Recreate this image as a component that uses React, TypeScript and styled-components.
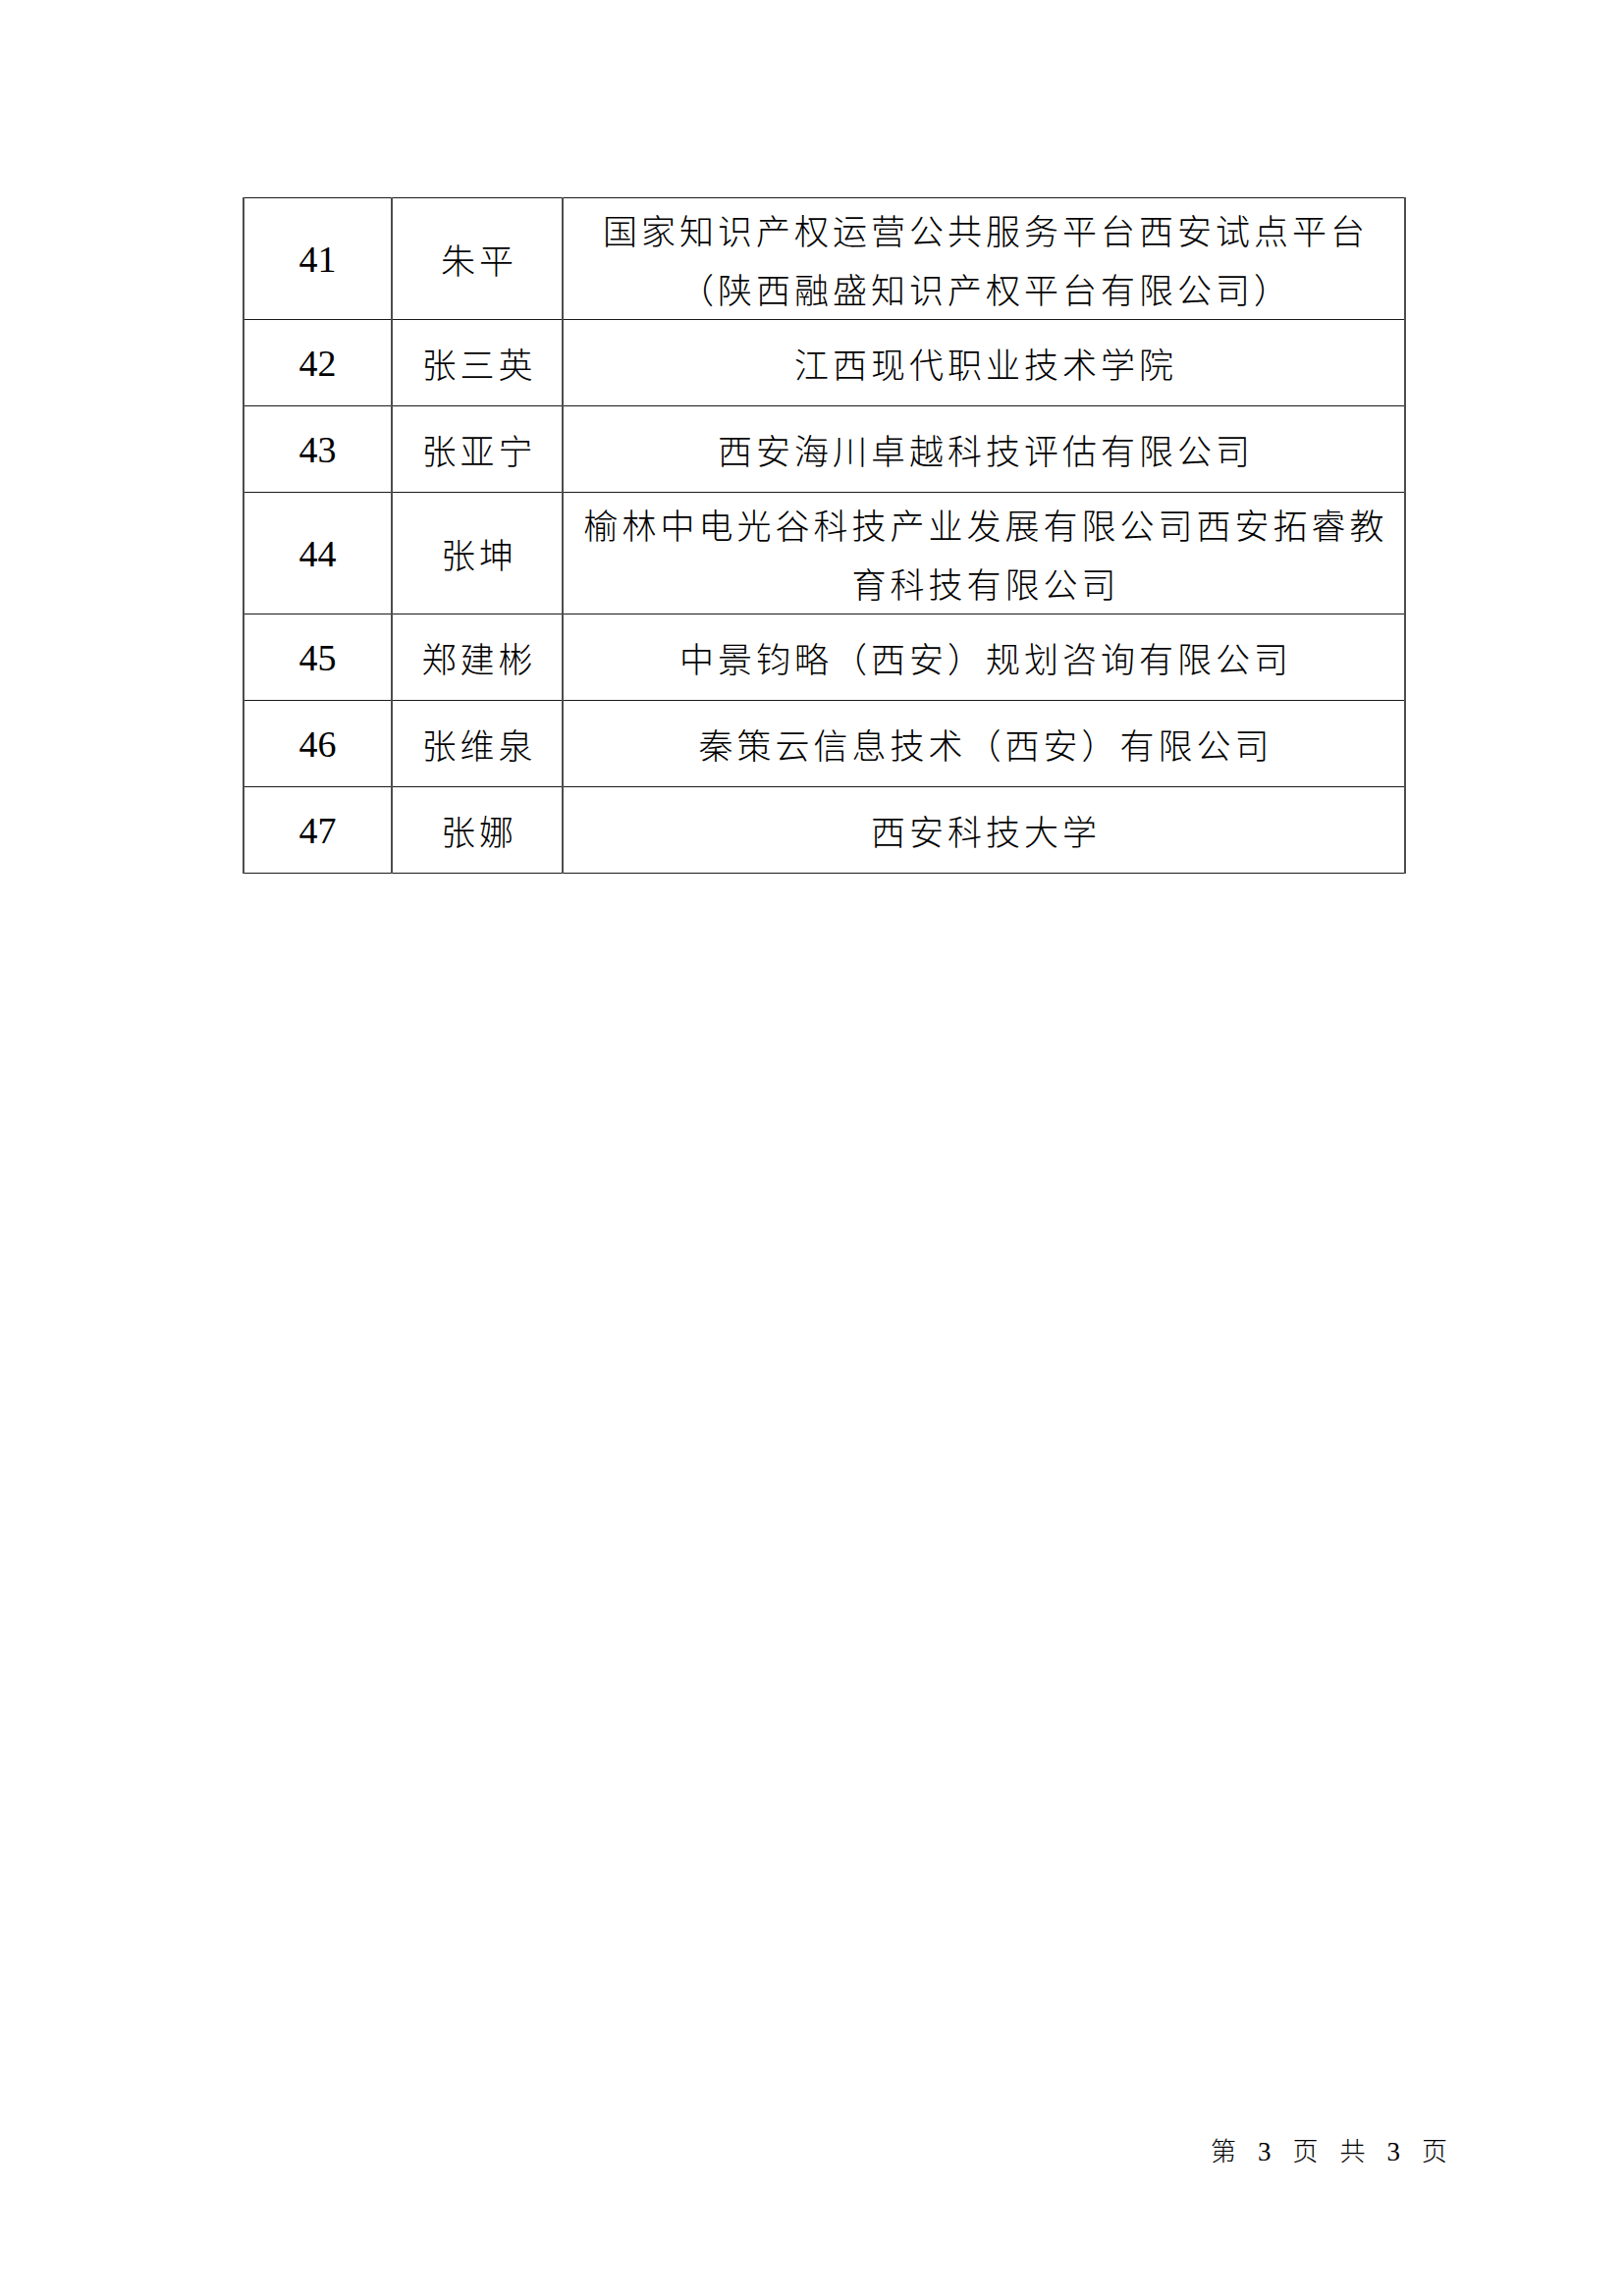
import React from "react";
import styled, { createGlobalStyle } from "styled-components";

const GlobalStyle = createGlobalStyle`
  html, body {
    margin: 0;
    padding: 0;
    background: #ffffff;
  }
  body {
    font-family: "Noto Sans CJK SC", "Noto Sans", sans-serif;
    color: #000000;
  }
`;

const Page = styled.div`
  width: 1654px;
  height: 2339px;
  box-sizing: border-box;
  display: flex;
  flex-direction: column;
  padding: 201px 0 132px 247px;
  background: #ffffff;
`;

const Table = styled.table`
  width: 1185px;
  border-collapse: collapse;
  table-layout: fixed;
`;

const Row = styled.tr<{ $tall?: boolean }>`
  height: ${(p) => (p.$tall ? "124px" : "88px")};
`;

const Cell = styled.td<{ $w?: number }>`
  ${(p) => (p.$w ? `width: ${p.$w}px;` : "")}
  border-top: 1.5px solid #1a1a1a;
  border-bottom: 1.5px solid #1a1a1a;
  border-left: 2px solid #4d4d4d;
  border-right: 2px solid #4d4d4d;
  padding: 0;
  text-align: center;
  vertical-align: middle;
`;

const Num = styled.span`
  font-family: "Liberation Serif", "Times New Roman", serif;
  font-size: 38px;
  line-height: 60px;
  color: #000;
`;

const CjkText = styled.span`
  display: inline-block;
  font-family: "Noto Sans CJK SC", "Noto Sans CJK JP", sans-serif;
  font-weight: 300;
  font-size: 35px;
  letter-spacing: 4px;
  margin-right: -4px;
  line-height: 60px;
  color: #000;
`;

const Footer = styled.div`
  margin-top: auto;
  display: flex;
  justify-content: flex-end;
  align-items: baseline;
  gap: 22px;
  padding-right: 180px;
  font-family: "Noto Sans CJK SC", sans-serif;
  font-weight: 300;
  font-size: 26px;
  line-height: 30px;
  color: #000;
`;

const FooterNum = styled.span`
  font-family: "Liberation Serif", "Times New Roman", serif;
  font-size: 27px;
`;

type Entry = { no: number; name: string; org: string[] };

const data: Entry[] = [
  {
    no: 41,
    name: "朱平",
    org: ["国家知识产权运营公共服务平台西安试点平台", "（陕西融盛知识产权平台有限公司）"],
  },
  { no: 42, name: "张三英", org: ["江西现代职业技术学院"] },
  { no: 43, name: "张亚宁", org: ["西安海川卓越科技评估有限公司"] },
  {
    no: 44,
    name: "张坤",
    org: ["榆林中电光谷科技产业发展有限公司西安拓睿教", "育科技有限公司"],
  },
  { no: 45, name: "郑建彬", org: ["中景钧略（西安）规划咨询有限公司"] },
  { no: 46, name: "张维泉", org: ["秦策云信息技术（西安）有限公司"] },
  { no: 47, name: "张娜", org: ["西安科技大学"] },
];

export default function App() {
  return (
    <>
      <GlobalStyle />
      <Page>
        <Table>
          <tbody>
            {data.map((d) => (
              <Row key={d.no} $tall={d.org.length > 1}>
                <Cell $w={149}>
                  <Num>{d.no}</Num>
                </Cell>
                <Cell $w={172}>
                  <CjkText>{d.name}</CjkText>
                </Cell>
                <Cell>
                  {d.org.map((line, i) => (
                    <React.Fragment key={i}>
                      <CjkText>{line}</CjkText>
                      {i < d.org.length - 1 && <br />}
                    </React.Fragment>
                  ))}
                </Cell>
              </Row>
            ))}
          </tbody>
        </Table>
        <Footer>
          <span>第</span>
          <FooterNum>3</FooterNum>
          <span>页</span>
          <span>共</span>
          <FooterNum>3</FooterNum>
          <span>页</span>
        </Footer>
      </Page>
    </>
  );
}
